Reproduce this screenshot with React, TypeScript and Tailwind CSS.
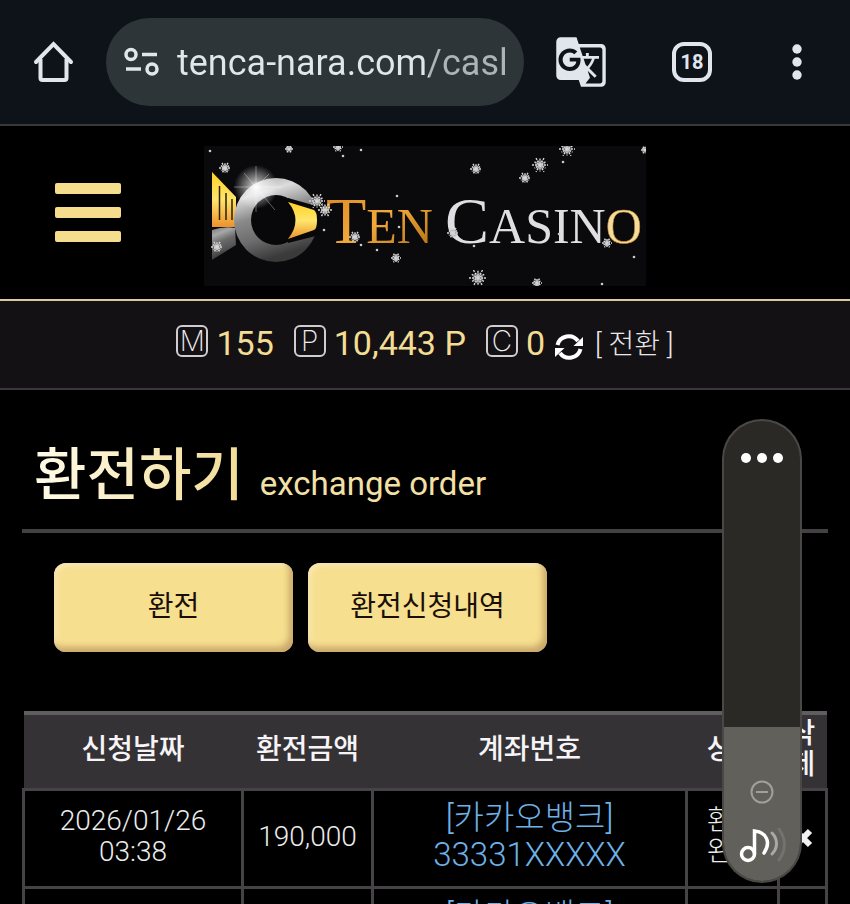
import React from "react";
import { MdGTranslate } from "react-icons/md";

interface Order {
  date: string;
  time: string;
  amount: string;
  bank: string;
  account: string;
  status: string;
}

const orders: Order[] = [
  {
    date: "2026/01/26",
    time: "03:38",
    amount: "190,000",
    bank: "[카카오뱅크]",
    account: "33331XXXXX",
    status: "환전완료",
  },
  {
    date: "2026/01/25",
    time: "22:14",
    amount: "150,000",
    bank: "[카카오뱅크]",
    account: "33331XXXXX",
    status: "환전완료",
  },
];

// x, y, radius
const flakes = [
  [21, 22, 6],
  [85, 3, 4],
  [134, 1, 5],
  [113, 55, 8],
  [121, 64, 7],
  [151, 91, 6],
  [192, 112, 5],
  [13, 101, 6],
  [272, 23, 6],
  [336, 19, 8],
  [321, 32, 6],
  [363, 3, 8],
  [249, 87, 6],
  [274, 132, 9],
  [333, 137, 5],
  [403, 97, 5],
  [441, 4, 4],
];

const dots = [
  [6, 5],
  [139, 10],
  [157, 4],
  [120, 84],
  [157, 99],
  [173, 104],
  [193, 50],
  [195, 81],
  [359, 16],
  [355, 88],
  [430, 111],
  [270, 100],
  [398, 138],
];

const Flake: React.FC<{ x: number; y: number; r: number }> = ({ x, y, r }) => (
  <g transform={`translate(${x} ${y})`} stroke="#d6d6d6" strokeWidth="1.4">
    <circle r={r * 0.6} fill="#8b8b8b" stroke="none" opacity="0.7" />
    {[0, 30, 60, 90, 120, 150].map((angle) => (
      <line
        key={angle}
        x1={angle % 60 === 0 ? -r : -r * 0.8}
        x2={angle % 60 === 0 ? r : r * 0.8}
        y1="0"
        y2="0"
        strokeDasharray="2 1"
        transform={`rotate(${angle})`}
      />
    ))}
  </g>
);

const Logo = () => (
  <svg viewBox="0 0 442 140" className="h-[140px] w-[442px]" aria-label="Ten Casino">
    <defs>
      <linearGradient id="silver" x1="0" y1="0" x2="0.3" y2="1">
        <stop offset="0" stopColor="#9c9c9c" />
        <stop offset="0.25" stopColor="#dcdcdc" />
        <stop offset="0.5" stopColor="#8a8a8a" />
        <stop offset="0.75" stopColor="#6c6c6c" />
        <stop offset="1" stopColor="#3a3a3a" />
      </linearGradient>
      <linearGradient id="gold" x1="0" y1="0" x2="0" y2="1">
        <stop offset="0" stopColor="#ffd126" />
        <stop offset="0.5" stopColor="#ffe56b" />
        <stop offset="1" stopColor="#eb922c" />
      </linearGradient>
      <linearGradient id="letters" x1="0" y1="0" x2="1" y2="1">
        <stop offset="0" stopColor="#d9861f" />
        <stop offset="0.5" stopColor="#f2a93a" />
        <stop offset="1" stopColor="#a9690f" />
      </linearGradient>
      <radialGradient id="glow">
        <stop offset="0" stopColor="#fff" />
        <stop offset="0.3" stopColor="#fff" stopOpacity="0.6" />
        <stop offset="1" stopColor="#fff" stopOpacity="0" />
      </radialGradient>
      <clipPath id="frame">
        <rect width="442" height="140" />
      </clipPath>
    </defs>
    <rect width="442" height="140" fill="#0a090b" />
    <g clipPath="url(#frame)">
      <path d="M8 26 L32 51 V81 H8 Z" fill="url(#gold)" />
      <path d="M15.500 40 V74 M22 47 V74 M28 53 V74" stroke="#2b2005" strokeWidth="1.5" />
      <path d="M8 84 Q20 80 31 82 L32 99 L8 114 Z" fill="url(#silver)" opacity="0.75" />
      <circle cx="72" cy="74" r="42" fill="url(#silver)" />
      <path d="M84 52 L116 61 V89 L84 97 Z" fill="#08080a" />
      <circle cx="72" cy="74" r="25" fill="#08080a" />
      <path d="M84 56 L110 64 Q113 66 113 74 Q113 83 110 84 L84 93 Q99 74 84 56 Z" fill="url(#gold)" />
      <circle cx="52" cy="41" r="22" fill="url(#glow)" />
      <path d="M52 20 V66 M30 41 H78 M40 27 L71 64 M65 28 L39 54" stroke="#fff" strokeWidth="1" opacity="0.35" />

      <text x="122" y="97" fontSize="66" fill="url(#letters)" fontFamily="Liberation Serif, serif">
        T<tspan fontSize="50">EN</tspan>
      </text>
      <text x="241" y="97" fontSize="66" fill="#dedee3" fontFamily="Liberation Serif, serif">
        C<tspan fontSize="50">ASIN</tspan>
        <tspan fontSize="50" fill="#f3dca0" stroke="#c6871f" strokeWidth="0.6">O</tspan>
      </text>

      {flakes.map(([x, y, r]) => (
        <Flake key={`${x}-${y}`} x={x} y={y} r={r} />
      ))}
      {dots.map(([x, y]) => (
        <circle key={`${x}-${y}`} cx={x} cy={y} r="1.3" fill="#c9c9c9" />
      ))}
    </g>
  </svg>
);

const BrowserBar = () => (
  <div className="flex h-[126px] items-center border-b-2 border-[#38393b] bg-[#0e131a] pl-[33px] pr-12 text-[#e1e5ec]">
    <button aria-label="Home">
      <svg viewBox="0 0 42 42" className="h-[42px] w-[42px]" fill="none" stroke="currentColor" strokeWidth="4">
        <path d="M3 21 L20.500 3 L38 21" strokeLinecap="round" />
        <path d="M7.500 18 V37 Q7.500 39 9.500 39 H31.500 Q33.500 39 33.500 37 V18" />
      </svg>
    </button>

    <div className="ml-[31px] flex h-[88px] min-w-0 flex-1 items-center rounded-full bg-[#2e3538] pl-[18px] pr-4">
      <button aria-label="Site settings">
        <svg viewBox="0 0 36 32" className="h-8 w-9" fill="none" stroke="currentColor" strokeWidth="3.500">
          <circle cx="7" cy="8.500" r="5" />
          <path d="M18 8.500 H33 M2 23 H17" />
          <circle cx="28" cy="23" r="5" />
        </svg>
      </button>
      <input
        type="text"
        aria-label="Address"
        defaultValue="tenca-nara.com/casl"
        className="ml-[17px] w-full min-w-0 bg-[linear-gradient(90deg,#e1e5ec_252px,#aeb3b8_252px)] bg-clip-text pt-[2px] font-['Roboto',sans-serif] text-4xl text-transparent outline-none"
      />
    </div>

    <button aria-label="Translate" className="ml-[30px]">
      <MdGTranslate className="h-[54px] w-[54px]" />
    </button>
    <button
      aria-label="Tabs"
      className="ml-16 flex h-10 w-10 items-center justify-center rounded-xl border-4 border-current font-['Roboto',sans-serif] text-xl font-bold"
    >
      18
    </button>
    <button aria-label="Menu" className="ml-20">
      <svg viewBox="0 0 10 36" className="h-9 w-[10px]" fill="currentColor">
        <circle cx="5" cy="5" r="4.700" />
        <circle cx="5" cy="18" r="4.700" />
        <circle cx="5" cy="31" r="4.700" />
      </svg>
    </button>
  </div>
);

const SiteHeader = () => (
  <header className="relative flex h-[175px] items-center border-b-2 border-[#d9cb9d] pt-1">
    <button
      aria-label="메뉴"
      className="absolute left-[55px] flex w-[66px] flex-col gap-[13px] pb-1"
    >
      <span className="h-[11px] w-full rounded-xs bg-[#f6dd8e]" />
      <span className="h-[11px] w-full rounded-xs bg-[#f6dd8e]" />
      <span className="h-[11px] w-full rounded-xs bg-[#f6dd8e]" />
    </button>
    <a href="#" className="mx-auto pt-[2px]">
      <Logo />
    </a>
  </header>
);

const Badge: React.FC<{ letter: string }> = ({ letter }) => (
  <span className="flex h-8 w-8 items-center justify-center rounded-md border-2 border-[#cfcdd0] font-['Inter',sans-serif] text-[28px] leading-7 font-extralight text-[#efedf0]">
    {letter}
  </span>
);

const RefreshIcon = () => (
  <svg viewBox="0 0 28 28" className="h-7 w-7">
    <g fill="none" stroke="currentColor" strokeWidth="4">
      <path d="M2.500 12 A11.500 11.500 0 0 1 23 8" />
      <path d="M25.500 16 A11.500 11.500 0 0 1 5 20" />
    </g>
    <path d="M28 4 V13 H18.500 Z" fill="currentColor" />
    <path d="M0 24 V15 H9.500 Z" fill="currentColor" />
  </svg>
);

const BalanceBar = () => (
  <div className="flex h-[89px] items-center justify-center border-b-2 border-[#39373a] bg-[#131113] pb-2 font-['Roboto','Noto_Sans_CJK_KR',sans-serif] text-[34px] leading-9 text-[#f3dc93]">
    <Badge letter="M" />
    <span className="ml-2 pt-1">155</span>
    <span className="ml-5">
      <Badge letter="P" />
    </span>
    <span className="ml-2 pt-1">10,443 P</span>
    <span className="ml-5">
      <Badge letter="C" />
    </span>
    <span className="ml-2 pt-1">0</span>
    <button aria-label="새로고침" className="ml-[10px] mt-3 text-white">
      <RefreshIcon />
    </button>
    <button className="ml-3 pt-2 text-[28px] font-light text-[#e8e6e9]">
      [ 전환 ]
    </button>
  </div>
);

const buttonClass =
  "h-[89px] w-[239px] rounded-xl bg-[#f6df8f] pb-2 text-[28px] text-[#1a0f08] shadow-[inset_-4px_-5px_6px_#c9a76a,inset_3px_3px_5px_#fae8b4]";

const cellClass = "border-3 border-[#454346] pb-1";

const OrderTable = () => (
  <table className="mt-[59px] w-full table-fixed border-collapse text-center font-['Roboto','Noto_Sans_CJK_KR',sans-serif] text-[28px] leading-[31px] font-light text-[#ececee]">
    <colgroup>
      <col className="w-[219px]" />
      <col className="w-[130px]" />
      <col />
      <col className="w-[92px]" />
      <col className="w-12" />
    </colgroup>
    <thead>
      <tr className="h-[76px] border-t-4 border-b-2 border-t-[#5f5d60] border-b-[#39373a] bg-[#343235] text-[#f6f4f7]">
        <th className="pb-1 font-medium">신청날짜</th>
        <th className="pb-1 font-medium">환전금액</th>
        <th className="pb-1 font-medium">계좌번호</th>
        <th className="pb-1 font-medium">상태</th>
        <th className="px-2 pb-1 font-medium break-all">삭제</th>
      </tr>
    </thead>
    <tbody>
      {orders.map((order) => (
        <tr key={order.date} className="h-[98px]">
          <td className={cellClass}>
            {order.date}
            <br />
            {order.time}
          </td>
          <td className={cellClass}>{order.amount}</td>
          <td className="border-3 border-[#454346] pb-1 text-[33px] leading-[37px] text-[#6db1e6]">
            {order.bank}
            <br />
            {order.account}
          </td>
          <td className="border-3 border-[#454346] px-4 pb-1 break-all">
            {order.status}
          </td>
          <td className={cellClass}>
            <button aria-label="삭제" className="align-middle">
              <svg viewBox="0 0 20 20" className="h-5 w-5" stroke="#f2f2f2" strokeWidth="6">
                <path d="M3 3 L17 17 M17 3 L3 17" />
              </svg>
            </button>
          </td>
        </tr>
      ))}
    </tbody>
  </table>
);

// System volume panel floating over the page
const VolumePanel = () => (
  <div className="absolute top-[419px] right-12 flex h-[464px] w-20 flex-col overflow-hidden rounded-full border-2 border-white/15 bg-[#2a2925]">
    <button aria-label="More" className="flex justify-center gap-[6px] pt-8">
      <span className="h-[10px] w-[10px] rounded-full bg-white" />
      <span className="h-[10px] w-[10px] rounded-full bg-white" />
      <span className="h-[10px] w-[10px] rounded-full bg-white" />
    </button>
    <div className="mt-auto flex h-[154px] flex-col items-center bg-[#61605b] pt-[53px]">
      <svg viewBox="0 0 24 24" className="h-6 w-6" fill="none" stroke="#a09f9b" strokeWidth="2">
        <circle cx="12" cy="12" r="10.500" />
        <path d="M6 12 H18" />
      </svg>
      <svg viewBox="0 0 48 40" className="mt-6 h-10 w-12" fill="none" strokeLinecap="round">
        <circle cx="10" cy="26" r="6.500" stroke="#fff" strokeWidth="3.500" />
        <path d="M16.500 26 V3 C29 4 33 15 26 25" stroke="#fff" strokeWidth="3.500" />
        <path d="M34 5 C40 11 40 20 34 26" stroke="#aaa9a5" strokeWidth="3" />
        <path d="M41 1 C48 11 48 22 41 32" stroke="#73726e" strokeWidth="3" />
      </svg>
    </div>
    <input
      type="range"
      aria-label="Volume"
      defaultValue={33}
      className="absolute inset-x-0 top-16 bottom-0 opacity-0 [direction:rtl] [writing-mode:vertical-lr]"
    />
  </div>
);

export default function App() {
  return (
    <div className="relative h-screen overflow-hidden bg-black font-['Noto_Sans_CJK_KR',sans-serif]">
      <BrowserBar />
      <SiteHeader />
      <BalanceBar />
      <main className="px-[22px]">
        <div className="flex h-[143px] items-baseline border-b-4 border-[#434144] pt-10 pl-3">
          <h1 className="bg-linear-to-r from-[#fffbe9] to-[#f3dc93] bg-clip-text text-[57px] leading-[80px] font-medium text-transparent">
            환전하기
          </h1>
          <span className="ml-4 font-['Roboto',sans-serif] text-[33px] text-[#f3e0a6]">
            exchange order
          </span>
        </div>
        <div className="mt-[30px] flex gap-[15px] pl-8">
          <button className={buttonClass}>환전</button>
          <button className={buttonClass}>환전신청내역</button>
        </div>
        <OrderTable />
      </main>
      <VolumePanel />
    </div>
  );
}
